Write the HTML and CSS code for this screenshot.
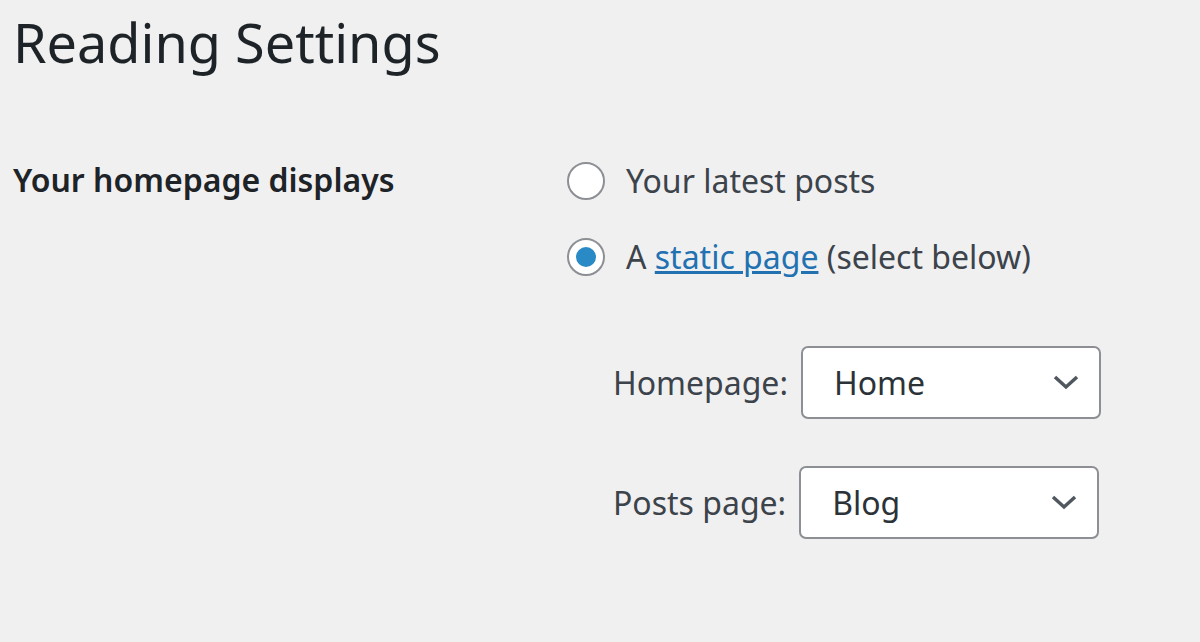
FILE: index.html
```html
<!DOCTYPE html>
<html lang="en">
<head>
  <meta charset="UTF-8">
  <title>Reading Settings</title>
  <link rel="stylesheet" href="styles.css">
</head>
<body>

  <h1>Reading Settings</h1>

  <div class="form-row">
    <div class="row-label">Your homepage displays</div>

    <div class="row-field">
      <label class="radio-line">
        <span class="radio"></span>
        Your latest posts
      </label>

      <label class="radio-line">
        <span class="radio checked"></span>
        <span>A <a href="#">static page</a> (select below)</span>
      </label>

      <div class="page-selects">
        <div class="select-line">
          <span class="select-label">Homepage:</span>
          <div class="select">
            <span>Home</span>
            <svg class="chevron" width="28" height="18" viewBox="0 0 28 18"><path d="M3 4 L14 14 L25 4" fill="none" stroke="#50575e" stroke-width="3.5"/></svg>
          </div>
        </div>

        <div class="select-line">
          <span class="select-label">Posts page:</span>
          <div class="select">
            <span>Blog</span>
            <svg class="chevron" width="28" height="18" viewBox="0 0 28 18"><path d="M3 4 L14 14 L25 4" fill="none" stroke="#50575e" stroke-width="3.5"/></svg>
          </div>
        </div>
      </div>
    </div>
  </div>

</body>
</html>
```

FILE: styles.css
```css
body {
  margin: 0;
  padding: 0 0 0 13px;
  background: #f0f0f1;
  font-family: 'Noto Sans', sans-serif;
  font-size: 32px;
  color: #3c434a;
}

h1 {
  margin: 10px 0 0 0;
  font-size: 54px;
  font-weight: 400;
  line-height: 1.2;
  color: #1d2327;
}

.form-row {
  display: flex;
  margin-top: 83px;
}

.row-label {
  width: 554px;
  font-weight: 600;
  color: #1d2327;
}

.row-field {
  display: flex;
  flex-direction: column;
}

.radio-line {
  display: flex;
  align-items: center;
  gap: 21px;
  height: 46px;
  margin-bottom: 30px;
}

.radio {
  box-sizing: border-box;
  width: 38px;
  height: 38px;
  border: 2px solid #8c8f94;
  border-radius: 50%;
  background: #fff;
  display: flex;
  align-items: center;
  justify-content: center;
}

.radio.checked::after {
  content: "";
  width: 20px;
  height: 20px;
  border-radius: 50%;
  background: #2a8ac6;
}

a {
  color: #2271b1;
}

.page-selects {
  margin: 36px 0 0 46px;
  display: flex;
  flex-direction: column;
  gap: 47px;
}

.select-line {
  display: flex;
  align-items: center;
  gap: 13px;
}

.select {
  box-sizing: border-box;
  width: 300px;
  height: 73px;
  border: 2px solid #8c8f94;
  border-radius: 7px;
  background: #fff;
  color: #2c3338;
  display: flex;
  align-items: center;
  justify-content: space-between;
  padding: 0 19px 0 31px;
}
```
